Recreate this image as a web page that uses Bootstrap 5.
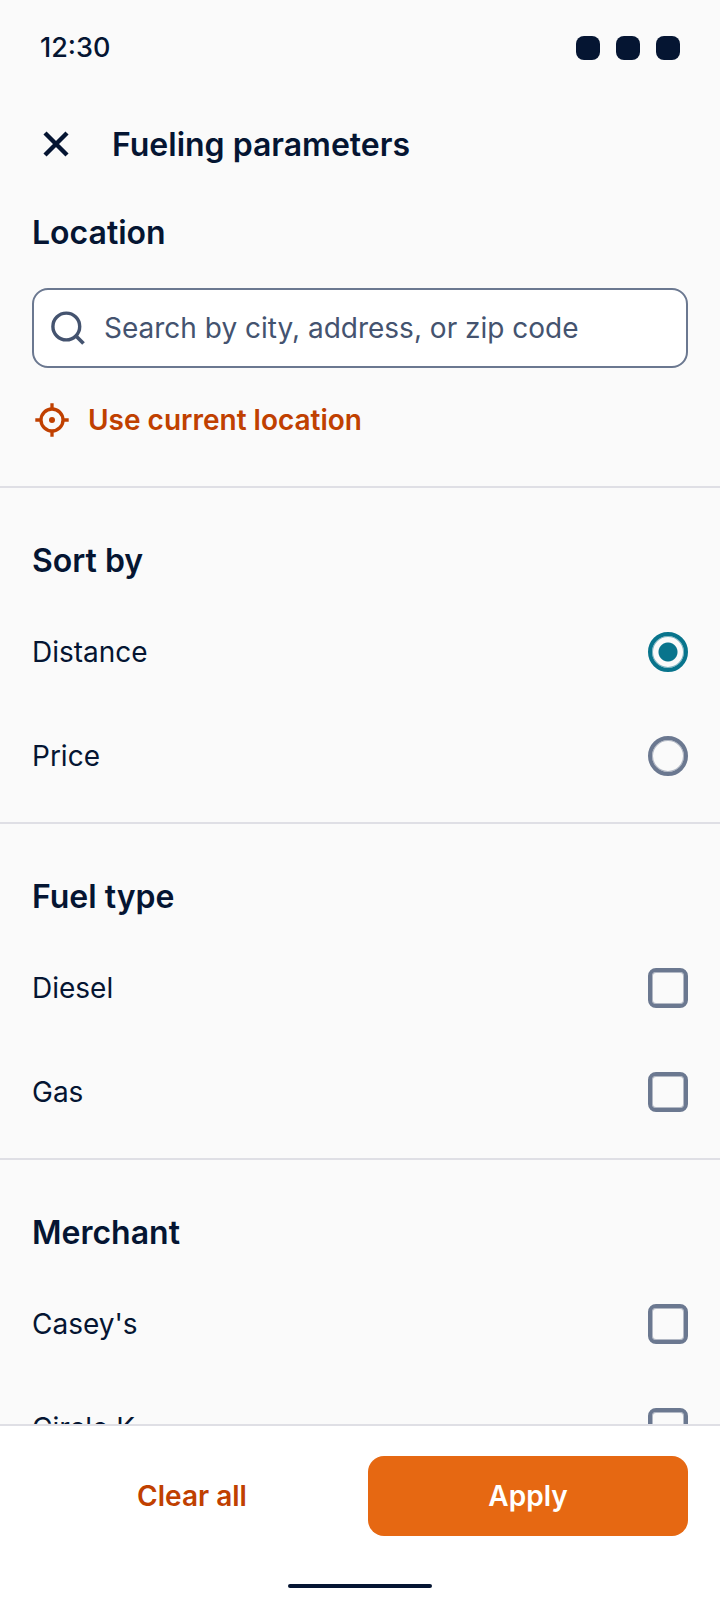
<!DOCTYPE html>
<html lang="en">
<head>
<meta charset="utf-8">
<meta name="viewport" content="width=device-width, initial-scale=1">
<title>Fueling parameters</title>
<link href="https://cdn.jsdelivr.net/npm/bootstrap@5.3.0/dist/css/bootstrap.min.css" rel="stylesheet">
<style>
  :root { --ink: #051532; --slate: #6b7890; --rust: #c04000; --teal: #08748c; --rule: #dfdfe5; }
  body { font-family: Inter, "Liberation Sans", sans-serif; font-size: 28px; line-height: 40px; color: var(--ink); background: #fafafa; }
  .status-bar { height: 96px; padding: 0 40px; font-size: 27px; font-weight: 500; }
  .status-dot { width: 24px; height: 24px; border-radius: 8px; background: var(--ink); }
  .title-bar { height: 96px; padding: 0 32px; gap: 32px; }
  .icon-btn { width: 48px; height: 48px; color: var(--ink); }
  .heading { font-size: 32px; line-height: 50px; font-weight: 600; margin: 0; }
  .title-bar .heading { padding-top: 2px; }
  .block { padding: 48px 32px 14px; border-bottom: 2px solid var(--rule); }
  .block .heading { padding-bottom: 14px; }
  .block-location { padding: 16px 32px 46px; }
  .search-box { height: 80px; margin-top: 16px; padding: 0 14px; gap: 16px; border: 2px solid var(--slate); border-radius: 16px; background: #fff; color: #44536f; }
  .search-box input { font-size: 28px; color: var(--ink); }
  .search-box input::placeholder { color: #44536f; opacity: 1; }
  .locate-btn, .locate-btn:hover { margin-top: 32px; gap: 16px; font-size: 28px; line-height: 40px; font-weight: 600; color: var(--rust); }
  .option { height: 104px; }
  .option .form-check-input { width: 40px; height: 40px; margin: 0; border: 4px solid var(--slate); background-color: transparent; box-shadow: inset 0 0 0 1px rgba(107, 120, 144, .5); }
  .option .form-check-input[type=checkbox] { border-radius: 8px; }
  .option .form-check-input[type=radio]:checked { border-color: var(--teal); box-shadow: inset 0 0 0 1px rgba(8, 116, 140, .5); background-image: radial-gradient(circle, var(--teal) 9px, transparent 10px); background-size: 100% 100%; }
  .footer-bar { height: 176px; background: #fff; border-top: 2px solid var(--rule); padding: 30px 32px 0; }
  .action { height: 80px; font-size: 28px; font-weight: 600; border-radius: 16px; }
  .action-clear, .action-clear:hover { color: var(--rust); }
  .action-apply, .action-apply:hover { color: #fff; background: #e66812; }
  .home-line { width: 144px; height: 4px; border-radius: 2px; background: var(--ink); margin-bottom: 12px; }
</style>
</head>
<body>
<div class="d-flex flex-column vh-100 overflow-hidden">
  <div class="status-bar d-flex align-items-center justify-content-between flex-shrink-0">
    <span>12:30</span>
    <div class="d-flex gap-3"><span class="status-dot"></span><span class="status-dot"></span><span class="status-dot"></span></div>
  </div>
  <header class="title-bar d-flex align-items-center flex-shrink-0">
    <button type="button" class="icon-btn btn p-0 border-0 d-flex align-items-center justify-content-center" aria-label="Close">
      <svg width="48" height="48" viewBox="0 0 48 48" fill="none" stroke="currentColor" stroke-width="4.4"><path d="M13 13 35 35M35 13 13 35"/></svg>
    </button>
    <h1 class="heading">Fueling parameters</h1>
  </header>
  <main class="flex-grow-1 overflow-y-auto" style="scrollbar-width: none">
    <section class="block block-location">
      <h2 class="heading"><label for="place">Location</label></h2>
      <div class="search-box d-flex align-items-center">
        <svg class="flex-shrink-0" width="40" height="40" viewBox="0 0 40 40" fill="none" stroke="currentColor" stroke-width="3.4"><circle cx="18.3" cy="18.5" r="13.4"/><path d="m27.5 27.5 8 8" stroke-width="3.8"/></svg>
        <input id="place" type="text" class="form-control border-0 bg-transparent p-0 shadow-none" placeholder="Search by city, address, or zip code">
      </div>
      <button type="button" class="locate-btn btn p-0 border-0 d-flex align-items-center">
        <svg width="40" height="40" viewBox="0 0 40 40" fill="none" stroke="currentColor" stroke-width="3.3"><circle cx="20" cy="20" r="11"/><path d="M20 3.3v6M20 31v5.7M3.3 20h6M31 20h5.7"/><circle cx="20" cy="20" r="3" fill="currentColor" stroke="none"/></svg>
        <span>Use current location</span>
      </button>
    </section>
    <section class="block">
      <h2 class="heading">Sort by</h2>
      <div class="option d-flex align-items-center justify-content-between"><label for="distance">Distance</label><input class="form-check-input" type="radio" name="sort" id="distance" checked></div>
      <div class="option d-flex align-items-center justify-content-between"><label for="price">Price</label><input class="form-check-input" type="radio" name="sort" id="price"></div>
    </section>
    <section class="block">
      <h2 class="heading">Fuel type</h2>
      <div class="option d-flex align-items-center justify-content-between"><label for="diesel">Diesel</label><input class="form-check-input" type="checkbox" id="diesel"></div>
      <div class="option d-flex align-items-center justify-content-between"><label for="gas">Gas</label><input class="form-check-input" type="checkbox" id="gas"></div>
    </section>
    <section class="block">
      <h2 class="heading">Merchant</h2>
      <div class="option d-flex align-items-center justify-content-between"><label for="caseys">Casey's</label><input class="form-check-input" type="checkbox" id="caseys"></div>
      <div class="option d-flex align-items-center justify-content-between"><label for="circlek">Circle K</label><input class="form-check-input" type="checkbox" id="circlek"></div>
    </section>
  </main>
  <footer class="footer-bar d-flex flex-column justify-content-between flex-shrink-0">
    <div class="row gx-3">
      <div class="col"><button type="button" class="action action-clear btn border-0 w-100">Clear all</button></div>
      <div class="col"><button type="button" class="action action-apply btn border-0 w-100">Apply</button></div>
    </div>
    <div class="home-line align-self-center"></div>
  </footer>
</div>
<script src="https://cdn.jsdelivr.net/npm/bootstrap@5.3.0/dist/js/bootstrap.bundle.min.js"></script>
</body>
</html>
